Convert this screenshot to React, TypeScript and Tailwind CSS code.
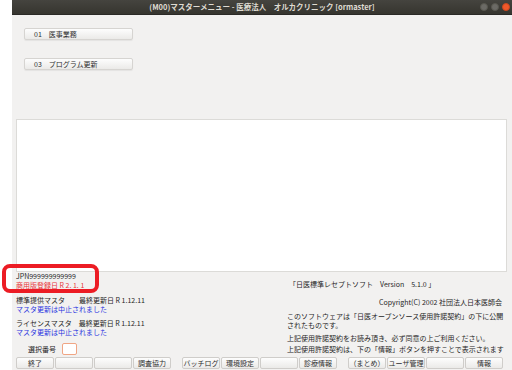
const jp = "font-['Noto_Sans_CJK_JP','Noto_Sans',sans-serif]";

function Btn({ label, className = '' }: { label?: string; className?: string }) {
  return (
    <div
      className={`h-[12px] flex items-center justify-center text-[7px] leading-none text-[#2e2e2e] bg-gradient-to-b from-[#fdfdfd] to-[#ebeae8] border border-[#cfcdca] rounded-[2px] whitespace-nowrap ${className}`}
    >
      {label}
    </div>
  );
}

function MenuBtn({ no, label }: { no: string; label: string }) {
  return (
    <div className="w-[109px] h-[12px] flex items-center pl-[9px] gap-[7px] text-[7px] leading-none text-[#2e2e2e] bg-gradient-to-b from-[#fdfdfd] to-[#ebeae8] border border-[#d6d4d1] rounded-[2px] shadow-[0_1px_1px_rgba(0,0,0,0.06)]">
      <span>{no}</span>
      <span>{label}</span>
    </div>
  );
}

export default function App() {
  return (
    <div className={`relative w-[512px] h-[370px] flex bg-white overflow-hidden ${jp}`}>
      {/* desktop strip */}
      <div className="w-[12px] bg-white" />

      {/* window */}
      <div className="flex-1 flex flex-col bg-[#f2f1f0]">
        {/* title bar */}
        <div className="relative h-[15px] flex items-center justify-center bg-gradient-to-b from-[#45443f] to-[#36352f] border-b border-[#2a2926]">
          <span className="text-[7.5px] font-bold text-[#dfdbd2] leading-none">
            (M00)マスターメニュー - 医療法人　オルカクリニック [ormaster]
          </span>
          <div className="absolute right-[2px] top-[3px] flex gap-[3px]">
            <span className="w-[8px] h-[8px] rounded-full bg-[#6b6a65] border border-[#58574f]" />
            <span className="w-[8px] h-[8px] rounded-full bg-[#6b6a65] border border-[#58574f]" />
            <span className="w-[8px] h-[8px] rounded-full bg-[#f0582a] border border-[#c9481f]" />
          </div>
        </div>

        {/* menu buttons */}
        <div className="pl-[12px] mt-[13px] flex flex-col gap-[18px]">
          <MenuBtn no="01" label="医事業務" />
          <MenuBtn no="03" label="プログラム更新" />
        </div>

        {/* text area */}
        <div className="ml-[4px] mr-[5px] mt-[49px] h-[153px] bg-white border border-[#dcdbd8]" />

        {/* info area */}
        <div className="h-[85px] flex text-[7px] leading-[9px] text-[#262626]">
          <div className="w-[275px] pl-[4px] flex flex-col">
            <div>JPN999999999999</div>
            <div className="text-[#e8363a]">商用版登録日 R 2. 1. 1</div>
            <div className="mt-[6px]">標準提供マスタ　　最終更新日 R 1.12.11</div>
            <div className="text-[#2b35e0]">マスタ更新は中止されました</div>
            <div className="mt-[5px]">ライセンスマスタ　最終更新日 R 1.12.11</div>
            <div className="text-[#2b35e0]">マスタ更新は中止されました</div>
            <div className="mt-[6px] pl-[12px] flex items-center gap-[6px]">
              <span>選択番号</span>
              <span className="w-[15px] h-[12px] bg-white border border-[#f0a584] rounded-[2px]" />
            </div>
          </div>
          <div className="flex-1 flex flex-col pt-[8px] whitespace-nowrap">
            <div className="pl-[2px]">「日医標準レセプトソフト　Version　5.1.0 」</div>
            <div className="mt-[9px] text-right pr-[10px]">Copyright(C) 2002 社団法人日本医師会</div>
            <div className="mt-[5px]">このソフトウェアは「日医オープンソース使用許諾契約」の下に公開</div>
            <div>されたものです。</div>
            <div className="mt-[4px]">上記使用許諾契約をお読み頂き、必ず同意の上ご利用ください。</div>
            <div className="mt-[2px]">上記使用許諾契約は、下の「情報」ボタンを押すことで表示されます</div>
          </div>
        </div>

        {/* function keys */}
        <div className="flex pl-[4px] gap-[11px]">
          <div className="flex gap-[1px]">
            <Btn label="終了" className="w-[38px]" />
            <Btn className="w-[38px]" />
            <Btn className="w-[38px]" />
            <Btn label="調査協力" className="w-[38px]" />
          </div>
          <div className="flex gap-[1px]">
            <Btn label="バッチログ" className="w-[38px]" />
            <Btn label="環境設定" className="w-[38px]" />
            <Btn className="w-[38px]" />
            <Btn label="診療情報" className="w-[38px]" />
          </div>
          <div className="flex gap-[1px]">
            <Btn label="（まとめ）" className="w-[38px]" />
            <Btn label="ユーザ管理" className="w-[38px]" />
            <Btn className="w-[38px]" />
            <Btn label="情報" className="w-[38px]" />
          </div>
        </div>
      </div>

      {/* red highlight */}
      <div className="absolute left-[2px] top-[264px] w-[97px] h-[29px] border-[4px] border-[#ec1c24] rounded-[8px]" />
    </div>
  );
}
